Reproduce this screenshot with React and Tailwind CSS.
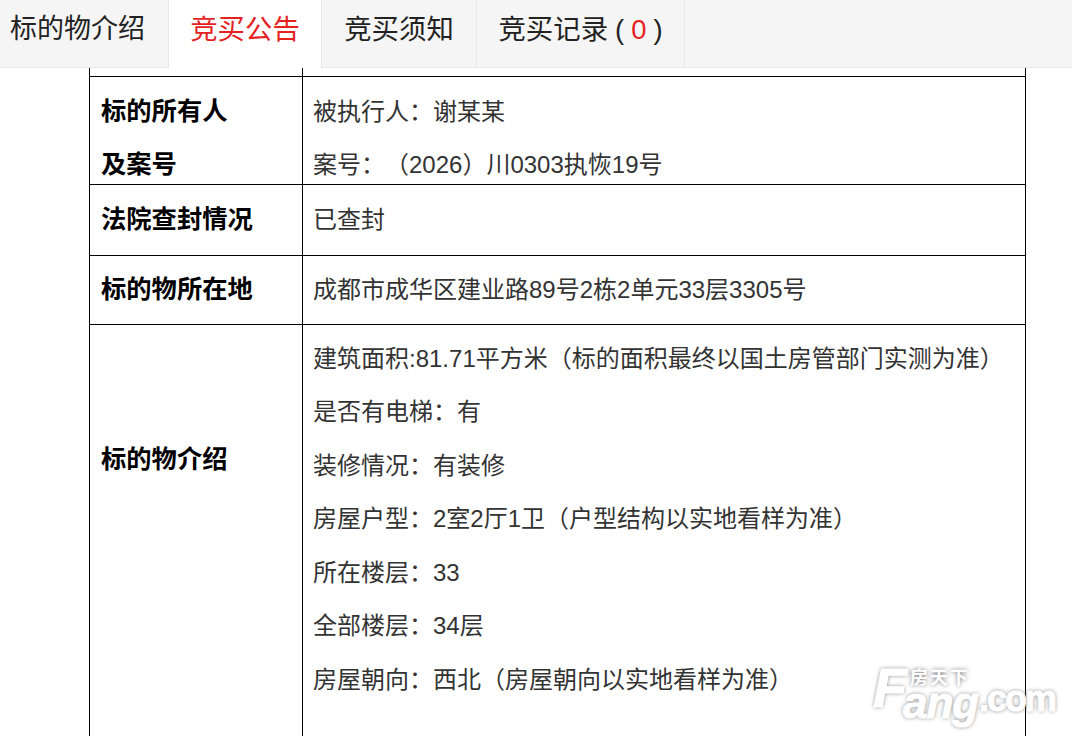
import React from "react";

const font = "font-['Liberation_Sans','Noto_Sans_CJK_SC',sans-serif]";

function Tab({ children, active, className }) {
  return (
    <div
      className={
        "flex h-[68px] items-center pb-[8px] text-[27.4px] " +
        (active
          ? "bg-white text-[#e4231f] "
          : "border-b border-[#e8e8e8] text-[#222] ") +
        className
      }
    >
      {children}
    </div>
  );
}

function Label({ children, className = "" }) {
  return (
    <td
      className={
        "border border-black pl-[11px] align-middle text-[25.3px] font-bold text-black " +
        className
      }
    >
      {children}
    </td>
  );
}

function Value({ children }) {
  return (
    <td className="border border-black pl-[10px] align-middle text-[24px] text-[#333] [text-spacing-trim:space-all]">
      {children}
    </td>
  );
}

export default function App() {
  const intro = [
    "建筑面积:81.71平方米（标的面积最终以国土房管部门实测为准）",
    "是否有电梯：有",
    "装修情况：有装修",
    "房屋户型：2室2厅1卫（户型结构以实地看样为准）",
    "所在楼层：33",
    "全部楼层：34层",
    "房屋朝向：西北（房屋朝向以实地看样为准）",
  ];

  return (
    <div className={"relative h-[736px] overflow-hidden bg-white " + font}>
      {/* TABS */}
      <div className="flex h-[68px] bg-[#f5f5f5]">
        <Tab className="w-[169px] border-r border-r-[#e8e8e8] pl-[10px] !text-[27px]">标的物介绍</Tab>
        <Tab active className="w-[153px] justify-center border-r border-r-[#e8e8e8]">竞买公告</Tab>
        <Tab className="w-[155px] justify-center border-r border-r-[#e8e8e8]">竞买须知</Tab>
        <Tab className="w-[208px] justify-center border-r border-r-[#e8e8e8]">
          竞买记录
          <span className="ml-[7px]">(</span>
          <span className="mx-[7px] text-[#e4231f]">0</span>
          <span>)</span>
        </Tab>
        <div className="flex-1 border-b border-[#e8e8e8]"></div>
      </div>

      {/* TABLE */}
      <table className="ml-[89px] w-[937px] table-fixed border-collapse leading-[53.5px]">
        <colgroup>
          <col className="w-[213px]" />
          <col />
        </colgroup>
        <tbody>
          <tr className="h-[8px]">
            <td className="border border-t-0 border-black"></td>
            <td className="border border-t-0 border-black"></td>
          </tr>
          <tr>
            <Label>
              <div className="mt-[8px]">标的所有人</div>
              <div className="h-[45.5px]">及案号</div>
            </Label>
            <Value>
              <div className="mt-[8px]">被执行人：谢某某</div>
              <div className="h-[45.5px]">案号：（2026）川0303执恢19号</div>
            </Value>
          </tr>
          <tr className="h-[71px]">
            <Label>法院查封情况</Label>
            <Value>已查封</Value>
          </tr>
          <tr className="h-[69px]">
            <Label>标的物所在地</Label>
            <Value>成都市成华区建业路89号2栋2单元33层3305号</Value>
          </tr>
          <tr>
            <Label className="!align-top pt-[108px]">标的物介绍</Label>
            <Value>
              <div className="pb-[40px] pt-[7px]">
                {intro.map((line) => (
                  <div key={line}>{line}</div>
                ))}
              </div>
            </Value>
          </tr>
        </tbody>
      </table>

      {/* WATERMARK */}
      <div className="pointer-events-none absolute left-[873px] top-[664px] h-[60px] w-[184px] font-['Liberation_Sans',sans-serif] font-bold text-white [-webkit-text-stroke:1px_white] [text-shadow:0_0_4px_#777]">
        <span className="absolute left-0 top-[-1px] text-[56px] italic leading-[50px]">F</span>
        <span className="absolute left-[30px] top-[22px] text-[44px] italic leading-[34px] tracking-[-1px]">ang</span>
        <span className="absolute left-[106px] top-[22px] text-[36px] leading-[26px] tracking-[-2px]">.com</span>
        <span className="absolute left-[37px] top-[3px] font-['Noto_Sans_CJK_SC',sans-serif] text-[18px] leading-[18px] tracking-[2px] [-webkit-text-stroke:0]">房天下</span>
      </div>
    </div>
  );
}
